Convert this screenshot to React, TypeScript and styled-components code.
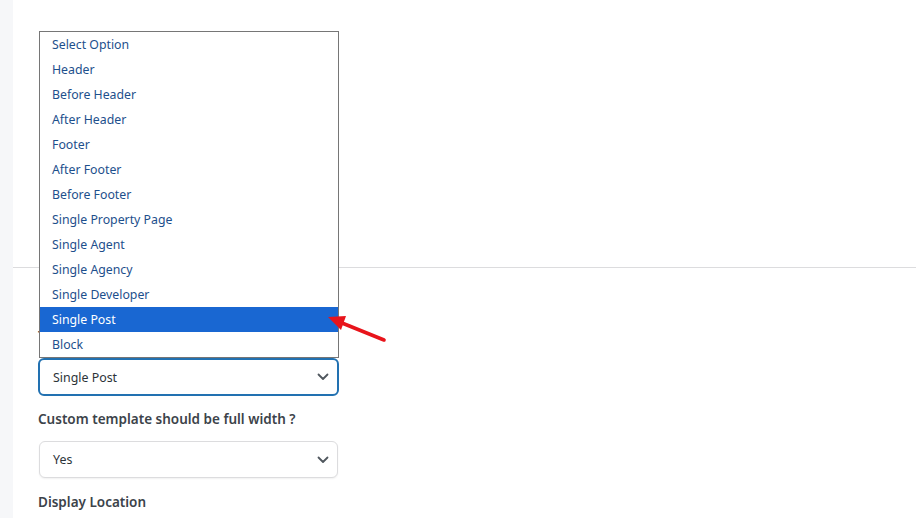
import React from 'react'
import styled, { createGlobalStyle } from 'styled-components'

const options = [
  'Select Option',
  'Header',
  'Before Header',
  'After Header',
  'Footer',
  'After Footer',
  'Before Footer',
  'Single Property Page',
  'Single Agent',
  'Single Agency',
  'Single Developer',
  'Single Post',
  'Block',
]

const GlobalStyle = createGlobalStyle`
  html, body {
    margin: 0;
    padding: 0;
    background: #ffffff;
    font-family: "Noto Sans", "Open Sans", "Liberation Sans", sans-serif;
  }
`

function Chevron() {
  return (
    <svg width="12" height="8" viewBox="0 0 12 8" fill="none">
      <path d="M1.5 1.5 L6 6 L10.5 1.5" stroke="#50575e" strokeWidth="1.8" strokeLinecap="round" strokeLinejoin="round" />
    </svg>
  )
}

export default function App() {
  const selected = 'Single Post'

  return (
    <>
      <GlobalStyle />
      <Page>
        <Sidebar />
        <Main>
          <TopSection />
          <Form>
            <Field>
              <Label>Template Type</Label>
              <Select $active>
                <SelectText>{selected}</SelectText>
                <Chevron />
              </Select>
            </Field>
            <Field $gap={15}>
              <Label>Custom template should be full width ?</Label>
              <Select>
                <SelectText>Yes</SelectText>
                <Chevron />
              </Select>
            </Field>
            <Field>
              <Label>Display Location</Label>
            </Field>
          </Form>

          <DropdownList>
            {options.map((o) => (
              <Option key={o} $selected={o === selected}>
                {o}
              </Option>
            ))}
          </DropdownList>

          <Pointer width="70" height="36" viewBox="0 0 70 36">
            <path d="M16 10 L58 27" stroke="#e8141b" strokeWidth="3.6" strokeLinecap="round" />
            <polygon points="2,4 20,3 15,17" fill="#e8141b" />
          </Pointer>
        </Main>
      </Page>
    </>
  )
}

const Page = styled.div`
  display: flex;
  width: 916px;
  height: 518px;
  overflow: hidden;
`

const Sidebar = styled.div`
  width: 13px;
  flex-shrink: 0;
  background: #f6f7f9;
`

const Main = styled.div`
  position: relative;
  flex: 1;
  display: flex;
  flex-direction: column;
`

const TopSection = styled.div`
  height: 267px;
  border-bottom: 1px solid #dcdcde;
  flex-shrink: 0;
`

const Form = styled.div`
  display: flex;
  flex-direction: column;
  padding: 59px 0 0 25px;
`

const Field = styled.div<{ $gap?: number }>`
  display: flex;
  flex-direction: column;
  margin-bottom: ${(p) => p.$gap ?? 14}px;
`

const Label = styled.div`
  font-size: 13.5px;
  line-height: 18px;
  font-weight: 600;
  color: #3c434a;
  margin-bottom: 13px;
`

const Select = styled.div<{ $active?: boolean }>`
  box-sizing: border-box;
  width: ${(p) => (p.$active ? '301px' : '299px')};
  margin-left: ${(p) => (p.$active ? '0' : '1px')};
  height: ${(p) => (p.$active ? '38px' : '37px')};
  display: flex;
  align-items: center;
  justify-content: space-between;
  padding: 0 8px 0 13px;
  border: ${(p) => (p.$active ? '2px solid #2271b1' : '1px solid #dcdcde')};
  border-radius: 6px;
  background: #fff;
  box-shadow: ${(p) => (p.$active ? 'none' : '0 1px 2px rgba(0,0,0,0.06)')};
`

const SelectText = styled.span`
  font-size: 12.4px;
  color: #2c3338;
`

const DropdownList = styled.div`
  position: absolute;
  left: 26px;
  top: 31px;
  width: 300px;
  box-sizing: border-box;
  border: 1px solid #767676;
  background: #fff;
  display: flex;
  flex-direction: column;
`

const Option = styled.div<{ $selected?: boolean }>`
  box-sizing: border-box;
  height: 25px;
  padding: 1px 0 0 12px;
  line-height: 24px;
  font-size: 12.3px;
  color: ${(p) => (p.$selected ? '#ffffff' : '#1d4f8c')};
  background: ${(p) => (p.$selected ? '#1967d2' : 'transparent')};
`

const Pointer = styled.svg`
  position: absolute;
  left: 313px;
  top: 313px;
  overflow: visible;
`
